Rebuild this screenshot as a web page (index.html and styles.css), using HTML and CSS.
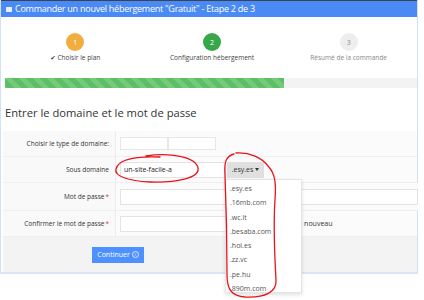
FILE: index.html
```html
<!DOCTYPE html>
<html lang="fr">
<head>
<meta charset="utf-8">
<link rel="stylesheet" href="styles.css">
</head>
<body>
<div class="page">
  <div class="panel">
    <div class="head"><span class="hicon"></span>Commander un nouvel hébergement "Gratuit" - Etape 2 de 3</div>
    <div class="steps">
      <div class="step"><span class="num n1">1</span><span class="lbl">✔ Choisir le plan</span></div>
      <div class="step"><span class="num n2">2</span><span class="lbl">Configuration hébergement</span></div>
      <div class="step"><span class="num n3">3</span><span class="lbl muted">Résumé de la commande</span></div>
    </div>
    <div class="progress"><div class="bar" style="width:67.7%"></div></div>
    <h2 class="title">Entrer le domaine et le mot de passe</h2>
    <div class="form">
      <div class="row">
        <div class="label">Choisir le type de domaine:</div>
        <div class="field"><span class="box"></span><span class="box"></span></div>
      </div>
      <div class="row">
        <div class="label">Sous domaine</div>
        <div class="field"><span class="input sub">un-site-facile-a</span><span class="ddbtn">.esy.es <span class="caret"></span></span></div>
      </div>
      <div class="row tall">
        <div class="label">Mot de passe<span class="req">*</span></div>
        <div class="field"><span class="input pw"></span></div>
      </div>
      <div class="row">
        <div class="label">Confirmer le mot de passe<span class="req">*</span></div>
        <div class="field"><span class="input pw2"></span><span class="gen">Générer un nouveau</span></div>
      </div>
      <div class="actions"><span class="btn">Continuer <span class="go">›</span></span></div>
    </div>
  </div>
  <ul class="menu">
    <li>.esy.es</li>
    <li>.16mb.com</li>
    <li>.wc.lt</li>
    <li>.besaba.com</li>
    <li>.hol.es</li>
    <li>.zz.vc</li>
    <li>.pe.hu</li>
    <li>.890m.com</li>
  </ul>
  <svg class="marks" width="424" height="300" viewBox="0 0 424 300">
    <path d="M146,156 C170,152 196,157 198,168 C200,178 176,183 150,182 C128,181 114,176 116,169 C118,160 134,156 160,157" />
    <path d="M236,153 C250,152 262,158 268,166 C276,174 276,186 275,200 C273,230 275,260 276,280 C277,292 265,298 245,297 C232,296 227,290 227,275 C227,240 226,200 225,175 C224,162 226,156 234,154" />
  </svg>
</div>
</body>
</html>
```

FILE: styles.css
```css
* { box-sizing: border-box; }
html, body { margin: 0; padding: 0; background: #fff; }
body { font-family: "Open Sans", "DejaVu Sans", sans-serif; color: #333; }
.page { position: relative; width: 424px; height: 300px; overflow: hidden; }
.panel {
  width: 418px;
  border-left: 1px solid #d3e1f6;
  border-right: 1px solid #d3e1f6;
  border-bottom: 2px solid #d8e5f7;
}
.head {
  height: 17px;
  background: #4a8af4;
  border-top: 1px solid #3d4350;
  color: #fff;
  font-size: 9px;
  letter-spacing: -0.25px;
  line-height: 16px;
  padding-left: 5px;
  white-space: nowrap;
  display: flex;
  align-items: center;
}
.hicon { width: 6px; height: 5px; background: #e8f0ff; margin-right: 3px; display: inline-block; }
.steps { display: flex; padding: 16px 0 0 6px; }
.step { width: 137px; display: flex; flex-direction: column; align-items: center; }
.num {
  width: 18px; height: 18px; border-radius: 50%;
  display: flex; align-items: center; justify-content: center;
  font-size: 7px; color: #fff;
}
.n1 { background: #f2ad40; }
.n2 { background: #36a84a; }
.n3 { background: #eeeeee; color: #8a8a8a; }
.lbl { font-size: 6.5px; line-height: 9px; margin-top: 2px; color: #444; white-space: nowrap; }
.lbl.muted { color: #888; }
.progress { margin: 16px 0 0 4px; height: 10px; background: #f3f3f3; }
.bar {
  height: 10px;
  background-color: #5cbf63;
  background-image: linear-gradient(45deg, rgba(255,255,255,.15) 25%, transparent 25%, transparent 50%, rgba(255,255,255,.15) 50%, rgba(255,255,255,.15) 75%, transparent 75%, transparent);
  background-size: 14px 14px;
}
.title { font-size: 11.2px; font-weight: 400; color: #333; margin: 16px 0 0 4px; line-height: 18px; height: 27px; }
.form { margin-left: 2px; background: #f9f9f9; }
.row { display: flex; height: 26px; border-bottom: 1px solid #efefef; }
.row.tall { height: 28px; }
.label {
  width: 113px; flex: none;
  border-right: 1px solid #ececec;
  font-size: 6.5px; color: #333;
  display: flex; align-items: center; justify-content: flex-end;
  padding-right: 6px;
  white-space: nowrap;
}
.req { color: #e33; margin-left: 1px; }
.field { flex: 1; display: flex; align-items: center; padding-left: 4px; background: #fbfbfb; }
.box { width: 48px; height: 13px; background: #fff; border: 1px solid #e7e7e7; }
.input { height: 16px; background: #fff; border: 1px solid #e3e3e3; font-size: 7px; display: flex; align-items: center; padding-left: 3px; color: #222; }
.sub { width: 106px; }
.pw { width: 298px; }
.pw2 { width: 150px; }
.gen { font-size: 7px; color: #333; margin-left: -5px; }
.ddbtn {
  height: 16px; width: 37px; margin-left: 1px;
  background: #e0e0e0; font-size: 7px; color: #333;
  display: flex; align-items: center; justify-content: center; gap: 2px;
}
.caret { width: 0; height: 0; border-left: 2px solid transparent; border-right: 2px solid transparent; border-top: 3px solid #333; }
.actions { height: 35px; background: #f3f3f3; display: flex; align-items: center; padding-left: 89px; }
.btn {
  width: 52px; height: 16px; background: #4d90fe; color: #fff;
  font-size: 7px; display: flex; align-items: center; justify-content: center; gap: 2px;
}
.go {
  width: 7px; height: 7px; border: 1px solid #dfeaff; border-radius: 50%;
  font-size: 6px; line-height: 5px; display: inline-flex; align-items: center; justify-content: center;
}
.menu {
  position: absolute; left: 225px; top: 179px; width: 77px; height: 114px;
  margin: 0; padding: 2px 0 0 4px; list-style: none;
  background: #fff; border: 1px solid #e4e4e4; box-shadow: 0 2px 4px rgba(0,0,0,.12);
}
.menu li { font-size: 7px; line-height: 14.3px; color: #555; }
.marks { position: absolute; left: 0; top: 0; pointer-events: none; }
.marks path { fill: none; stroke: #e8141c; stroke-width: 1.3; stroke-linecap: round; }
```
